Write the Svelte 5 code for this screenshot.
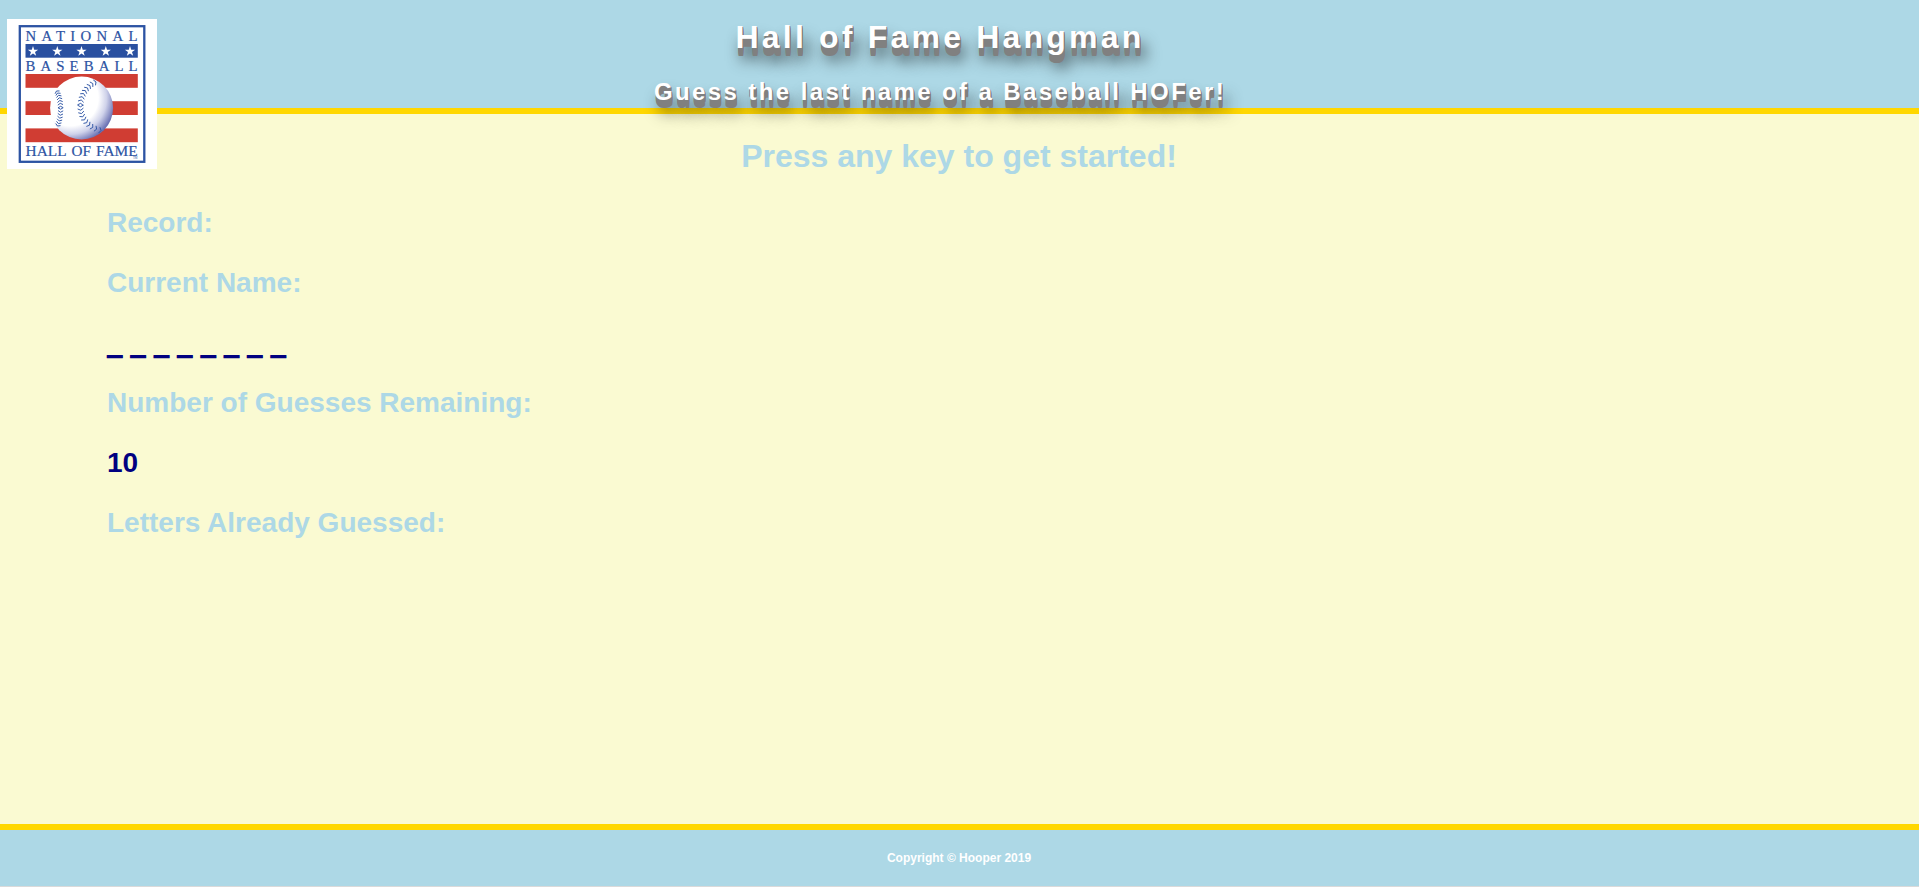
<script>
  const wins = '';
  const currentName = Array(8).fill('_').join(' ');
  const guessesRemaining = 10;
  const lettersGuessed = '';

  const stars = [26, 50.3, 74.5, 98.8, 123];
  const starPoints = Array.from({ length: 10 }, (_, i) => {
    const r = i % 2 ? 2.1 : 5.4;
    const a = (Math.PI / 5) * i - Math.PI / 2;
    return `${(r * Math.cos(a)).toFixed(2)},${(r * Math.sin(a)).toFixed(2)}`;
  }).join(' ');

  // Chevron stitches spaced along a cubic seam curve
  function seam([p0, p1, p2, p3], count, size) {
    let d = '';
    for (let i = 0; i < count; i++) {
      const t = i / (count - 1);
      const u = 1 - t;
      const at = (k) => u * u * u * p0[k] + 3 * u * u * t * p1[k] + 3 * u * t * t * p2[k] + t * t * t * p3[k];
      const slope = (k) => 3 * u * u * (p1[k] - p0[k]) + 6 * u * t * (p2[k] - p1[k]) + 3 * t * t * (p3[k] - p2[k]);
      const len = Math.hypot(slope(0), slope(1));
      const tx = slope(0) / len;
      const ty = slope(1) / len;
      const dir = t < 0.5 ? -1 : 1;
      const x = at(0);
      const y = at(1);
      for (const side of [-1, 1]) {
        const sx = x - ty * side * size - tx * dir * size * 0.6;
        const sy = y + tx * side * size - ty * dir * size * 0.6;
        d += `M${x.toFixed(2)} ${y.toFixed(2)}L${sx.toFixed(2)} ${sy.toFixed(2)}`;
      }
    }
    return d;
  }
  const leftSeam = seam([[49.5, 72], [54.5, 80], [55, 97], [50.5, 107]], 14, 2.6);
  const rightSeam = seam([[89, 63], [69, 71], [66, 105], [94, 111.5]], 19, 2.9);
</script>

<header>
  <svg class="logo" viewBox="0 0 150 150" role="img" aria-label="National Baseball Hall of Fame">
    <defs>
      <radialGradient id="ball" cx="0.32" cy="0.34" r="0.74">
        <stop offset="0.6" stop-color="#fff" />
        <stop offset="0.78" stop-color="#cfd2ea" />
        <stop offset="1" stop-color="#6068ae" />
      </radialGradient>
    </defs>
    <rect width="150" height="150" fill="#fff" />
    <rect x="12.8" y="7.2" width="124.5" height="135.6" fill="none" stroke="#2c53a3" stroke-width="2.3" />
    <rect x="18.5" y="25" width="112.3" height="13.7" fill="#2a50a0" />
    {#each stars as x}
      <polygon points={starPoints} transform="translate({x} 32.4)" fill="#fff" />
    {/each}
    <g fill="#d03d33">
      <rect x="18.5" y="55" width="112.3" height="13.8" />
      <rect x="18.5" y="82.2" width="112.3" height="13.8" />
      <rect x="18.5" y="109.4" width="112.3" height="13.8" />
    </g>
    <circle cx="74.6" cy="89" r="31.5" fill="url(#ball)" />
    <g fill="none" stroke="#2c53a3" stroke-width="0.95">
      <path d={leftSeam} />
      <path d={rightSeam} />
    </g>
    <g class="lettering">
      <text x="18.6" y="21.9" font-size="14.8" textLength="112" lengthAdjust="spacing">NATIONAL</text>
      <text x="18.6" y="51.9" font-size="14.8" textLength="112" lengthAdjust="spacing">BASEBALL</text>
      <text font-size="15.6">
        <tspan x="18.6" y="137.2" textLength="40.4" lengthAdjust="spacingAndGlyphs">HALL</tspan>
        <tspan x="64.6" y="137.2" textLength="19.4" lengthAdjust="spacingAndGlyphs">OF</tspan>
        <tspan x="89" y="137.2" textLength="41.6" lengthAdjust="spacingAndGlyphs">FAME</tspan>
      </text>
      <text class="mark" x="126" y="140.2" font-size="3">TM</text>
    </g>
  </svg>
  <div class="titles">
    <h1>Hall of Fame Hangman</h1>
    <h2>Guess the last name of a Baseball HOFer!</h2>
  </div>
</header>

<main>
  <h1>Press any key to get started!</h1>
  <section>
    <p>Record: {wins}</p>
    <p>Current Name:</p>
    <p class="value blanks">{currentName}</p>
    <p>Number of Guesses Remaining:</p>
    <p class="value">{guessesRemaining}</p>
    <p>Letters Already Guessed: {lettersGuessed}</p>
  </section>
</main>

<footer>Copyright © Hooper 2019</footer>

<style>
  :global(body) {
    margin: 0;
    background: #fff;
    font-family: 'Liberation Sans', Arial, sans-serif;
    font-weight: bold;
  }
  :global(#app) {
    display: flex;
    flex-direction: column;
    height: 890px;
  }
  h1, h2, p {
    margin: 0;
    font-weight: bold;
  }
  header {
    position: relative;
    box-sizing: border-box;
    height: 114px;
    background: lightblue;
    border-bottom: 6px solid gold;
  }
  .logo {
    position: absolute;
    left: 7px;
    top: 19px;
    width: 150px;
    height: 150px;
  }
  .lettering {
    fill: #2c53a3;
    stroke: #2c53a3;
    stroke-width: 0.2px;
    font-family: 'Liberation Serif', serif;
    font-weight: normal;
  }
  .mark {
    stroke: none;
  }
  .titles {
    position: relative;
    padding: 19px 39px 0 0;
    text-align: center;
    color: #fff;
    text-shadow: 1px 1px 0 grey, 1px 2px 0 grey, 1px 3px 0 grey, 1px 4px 0 grey,
      1px 5px 0 grey, 1px 6px 0 grey, 1px 7px 0 grey, 1px 8px 0 grey,
      5px 13px 15px rgba(0, 0, 0, 0.8);
  }
  .titles h1 {
    font-size: 32px;
    line-height: 36px;
    letter-spacing: 0.1em;
  }
  .titles h2 {
    margin-top: 23px;
    font-size: 24px;
    line-height: 28px;
    letter-spacing: 0.1em;
  }
  main {
    flex: 1;
    background: lightgoldenrodyellow;
    color: lightblue;
  }
  main h1 {
    padding: 24px 1px 0 0;
    font-size: 32px;
    line-height: 36px;
    text-align: center;
  }
  section {
    padding: 19px 0 0 107px;
  }
  p {
    font-size: 28px;
    line-height: 60px;
  }
  .value {
    color: navy;
  }
  .blanks {
    padding-top: 1px;
    margin-bottom: -1px;
    text-shadow: 0 1px 0 navy, 0 2px 0 navy;
  }
  footer {
    box-sizing: border-box;
    height: 63px;
    margin-bottom: 3px;
    padding-right: 1px;
    border-top: 6px solid gold;
    border-bottom: 1px solid #dadada;
    background: lightblue;
    color: #fff;
    font-size: 12px;
    line-height: 56px;
    text-align: center;
  }
</style>
